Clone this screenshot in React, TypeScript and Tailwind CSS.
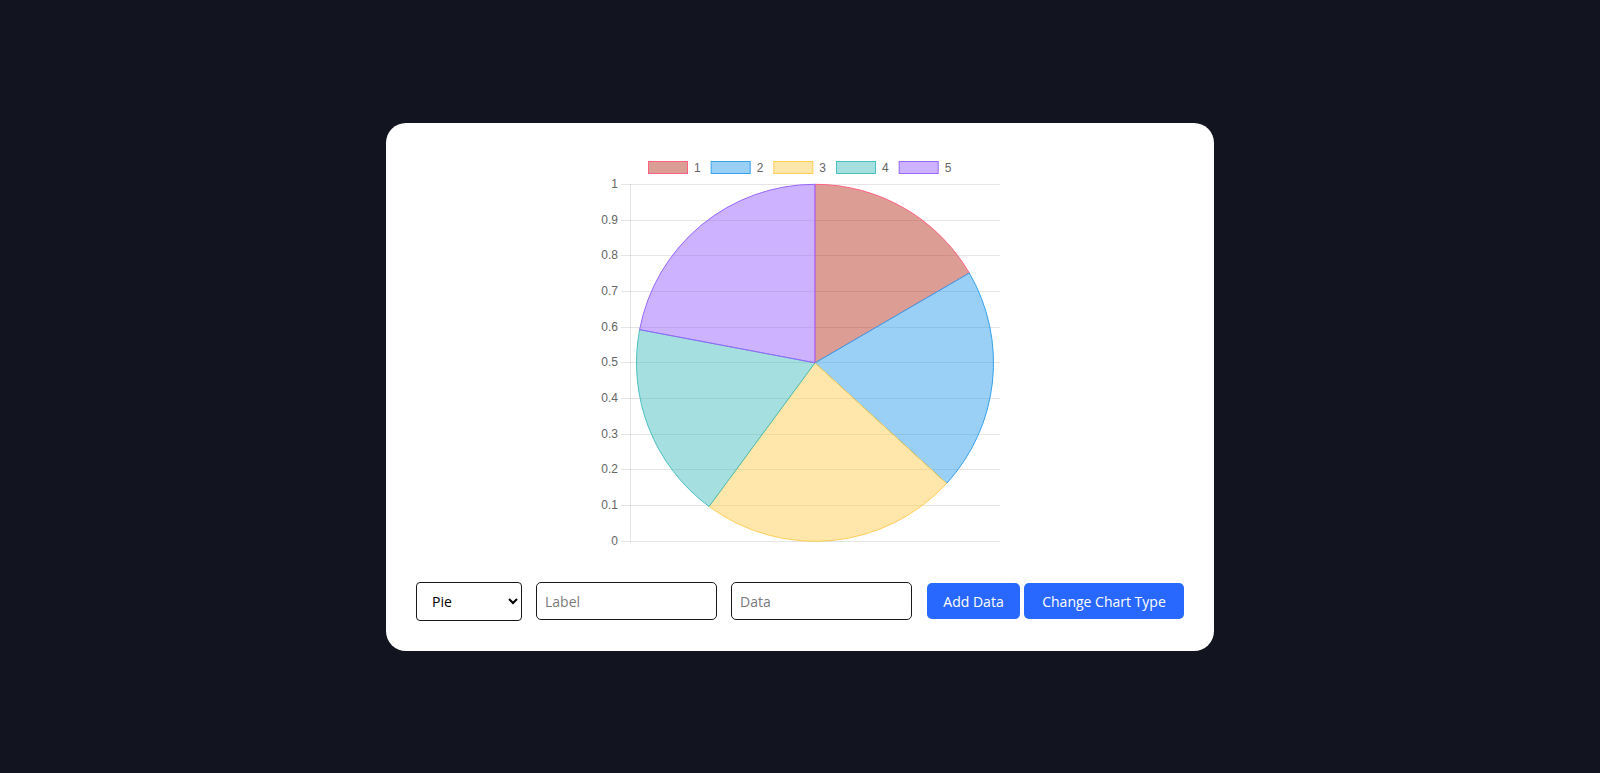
import React from "react";

const data = [59.8, 72.7, 83.9, 64.3, 79.3];
const fills = [
  "rgba(185,61,41,0.5)",
  "rgba(54,162,235,0.5)",
  "rgba(255,206,86,0.5)",
  "rgba(75,192,192,0.5)",
  "rgba(153,102,255,0.5)",
];
const strokes = [
  "rgb(255,99,132)",
  "rgb(54,162,235)",
  "rgb(255,206,86)",
  "rgb(75,192,192)",
  "rgb(153,102,255)",
];

function PieChart() {
  const cx = 215;
  const cy = 210.8;
  const r = 178.5;
  const total = data.reduce((a, b) => a + b, 0);
  let angle = -Math.PI / 2;
  const slices = data.map((v, i) => {
    const a0 = angle;
    const a1 = angle + (v / total) * Math.PI * 2;
    angle = a1;
    const x0 = cx + r * Math.cos(a0);
    const y0 = cy + r * Math.sin(a0);
    const x1 = cx + r * Math.cos(a1);
    const y1 = cy + r * Math.sin(a1);
    const large = a1 - a0 > Math.PI ? 1 : 0;
    const d = `M ${cx} ${cy} L ${x0} ${y0} A ${r} ${r} 0 ${large} 1 ${x1} ${y1} Z`;
    return <path key={i} d={d} fill={fills[i]} stroke={strokes[i]} strokeWidth={1} />;
  });

  const ticks = Array.from({ length: 11 }, (_, i) => i);
  const font = "'Liberation Sans', Arial, sans-serif";

  return (
    <svg width={400} height={400} viewBox="0 0 400 400">
      {data.map((_, i) => {
        const x = 48 + i * 62.67;
        return (
          <g key={i}>
            <rect x={x + 0.5} y={9.5} width={39} height={12} fill={fills[i]} stroke={strokes[i]} strokeWidth={1} />
            <text x={x + 46} y={19.5} fontSize={12} fill="#666" fontFamily={font}>
              {i + 1}
            </text>
          </g>
        );
      })}
      {ticks.map((i) => {
        const y = Math.floor(389.3 - i * 35.7) + 0.5;
        const label = i === 10 ? "1" : i === 0 ? "0" : `0.${i}`;
        return (
          <g key={i}>
            <line x1={21} x2={400} y1={y} y2={y} stroke="rgba(0,0,0,0.1)" strokeWidth={1} />
            <text x={18} y={y + 3} fontSize={12} fill="#666" textAnchor="end" fontFamily={font}>
              {label}
            </text>
          </g>
        );
      })}
      <line x1={30.5} x2={30.5} y1={32} y2={390} stroke="rgba(0,0,0,0.1)" strokeWidth={1} />
      {slices}
    </svg>
  );
}

export default function App() {
  return (
    <div
      className="min-h-screen bg-[#12141f] flex items-center justify-center"
      style={{ fontFamily: "'Open Sans', 'Noto Sans', sans-serif" }}
    >
      <div className="bg-white rounded-[20px] w-[828px] px-[30px] pt-[29px] pb-[30px]">
        <div className="w-[400px] h-[400px] mx-auto">
          <PieChart />
        </div>
        <div className="flex items-center mt-[30px]">
          <select
            defaultValue="pie"
            className="w-[106px] h-[39px] border border-[#1a1a1a] rounded-[4px] pl-[11px] pr-[6px] text-[14px] text-black bg-white"
          >
            <option value="pie">Pie</option>
            <option value="bar">Bar</option>
            <option value="line">Line</option>
          </select>
          <input
            placeholder="Label"
            className="ml-[14px] w-[181px] h-[38px] border border-[#1a1a1a] rounded-[5px] px-[8px] text-[14px] placeholder:text-[#7a7a7a] outline-none"
          />
          <input
            placeholder="Data"
            className="ml-[14px] w-[181px] h-[38px] border border-[#1a1a1a] rounded-[5px] px-[8px] text-[14px] placeholder:text-[#7a7a7a] outline-none"
          />
          <button className="ml-[15px] w-[93px] h-[36px] bg-[#2968ff] text-white rounded-[5px] text-[14px] font-medium">
            Add Data
          </button>
          <button className="ml-[4px] w-[160px] h-[36px] bg-[#2968ff] text-white rounded-[5px] text-[14px] font-medium">
            Change Chart Type
          </button>
        </div>
      </div>
    </div>
  );
}
